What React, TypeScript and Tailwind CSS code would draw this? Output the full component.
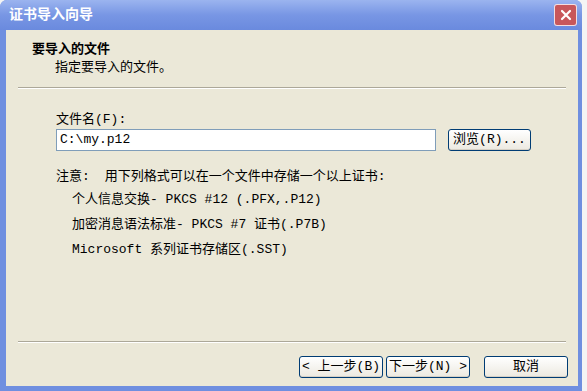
import React from "react";

const FONT = { fontFamily: '"Liberation Mono", "Noto Sans CJK SC", monospace' };

function XpButton({ children, className = "" }: { children: React.ReactNode; className?: string }) {
  return (
    <div
      className={
        "flex h-[22px] items-center justify-center rounded-[3px] border border-[#003c74] bg-gradient-to-b from-[#ffffff] to-[#ece9e0] text-black shadow-[inset_0_-1px_0_#d6d0c5] " +
        className
      }
    >
      {children}
    </div>
  );
}

export default function App() {
  return (
    <div className="flex h-[391px] w-[587px] bg-[#f4f4f4] text-[13px] leading-[14px] text-black" style={FONT}>
      <div className="flex h-full w-[582px] flex-col rounded-t-[7px] bg-[#6f8fe0]">
        {/* title bar */}
        <div className="flex h-[30px] items-center justify-between rounded-t-[7px] bg-gradient-to-b from-[#9bb4ef] via-[#7896e4] to-[#6a8ade] pl-[9px] pr-[5px]">
          <span className="text-[14px] font-bold text-white">证书导入向导</span>
          <div className="flex h-[22px] w-[23px] items-center justify-center rounded-[3px] border border-white/80 bg-[#c8575a]">
            <svg width="12" height="12" viewBox="0 0 12 12">
              <path d="M2 2 L10 10 M10 2 L2 10" stroke="white" strokeWidth="2.2" strokeLinecap="round" />
            </svg>
          </div>
        </div>
        {/* client area */}
        <div className="mb-[5px] ml-[6px] mr-[4px] flex flex-1 flex-col bg-[#ebe8d8]">
          <div className="px-[26px] pt-[13px]">
            <div className="font-bold">要导入的文件</div>
            <div className="mt-[4px] pl-[23px]">指定要导入的文件。</div>
          </div>
          <div className="mx-[12px] mt-[12px] h-[2px] border-t border-[#aca899] border-b-white" style={{ borderBottomWidth: 1 }} />
          <div className="flex flex-1 flex-col pl-[50px] pr-[42px] pt-[24px]">
            <div>文件名(F):</div>
            <div className="mt-[2px] flex items-center">
              <div className="flex h-[22px] w-[380px] items-center border border-[#7f9db9] bg-white px-[3px]">C:\my.p12</div>
              <XpButton className="ml-[12px] w-[83px]">浏览(R)...</XpButton>
            </div>
            <div className="mt-[19px] flex">
              <span>注意:</span>
              <span className="ml-[15px]">用下列格式可以在一个文件中存储一个以上证书:</span>
            </div>
            <div className="mt-[9px] flex flex-col gap-[11px] pl-[16px]">
              <div>个人信息交换- PKCS #12 (.PFX,.P12)</div>
              <div>加密消息语法标准- PKCS #7 证书(.P7B)</div>
              <div>Microsoft 系列证书存储区(.SST)</div>
            </div>
          </div>
          <div className="mx-[12px] h-[2px] border-t border-[#aca899] border-b-white" style={{ borderBottomWidth: 1 }} />
          <div className="flex justify-end pb-[8px] pr-[10px] pt-[13px]">
            <XpButton className="w-[84px]">&lt; 上一步(B)</XpButton>
            <XpButton className="ml-[3px] w-[84px]">下一步(N) &gt;</XpButton>
            <XpButton className="ml-[14px] w-[84px]">取消</XpButton>
          </div>
        </div>
      </div>
    </div>
  );
}
